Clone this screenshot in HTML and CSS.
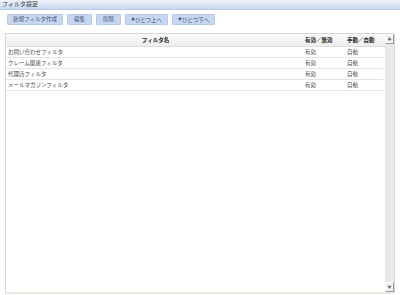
FILE: index.html
```html
<!DOCTYPE html>
<html lang="ja">
<head>
    <meta charset="UTF-8">
    <title>フィルタ設定</title>
    <link rel="stylesheet" href="styles.css">
</head>
<body>
    <div class="title-bar">フィルタ設定</div>

    <!-- ボタン -->
    <div class="toolbar">
        <button class="btn">新規フィルタ作成</button>
        <button class="btn">編集</button>
        <button class="btn">削除</button>
        <button class="btn"><span class="arrow">▲</span>ひとつ上へ</button>
        <button class="btn"><span class="arrow">▼</span>ひとつ下へ</button>
    </div>

    <!-- 一覧 -->
    <div class="list-box">
        <div class="list-main">
            <div class="row head">
                <div class="c-name">フィルタ名</div>
                <div class="c-on">有効／無効</div>
                <div class="c-auto">手動／自動</div>
            </div>
            <div class="row">
                <div class="c-name">お問い合わせフィルタ</div>
                <div class="c-on">有効</div>
                <div class="c-auto">自動</div>
            </div>
            <div class="row">
                <div class="c-name">クレーム関連フィルタ</div>
                <div class="c-on">有効</div>
                <div class="c-auto">自動</div>
            </div>
            <div class="row">
                <div class="c-name">代理店フィルタ</div>
                <div class="c-on">有効</div>
                <div class="c-auto">自動</div>
            </div>
            <div class="row">
                <div class="c-name">メールマガジンフィルタ</div>
                <div class="c-on">有効</div>
                <div class="c-auto">自動</div>
            </div>
        </div>
        <div class="scrollbar">
            <div class="sb-btn">▲</div>
            <div class="sb-track"></div>
            <div class="sb-btn">▼</div>
        </div>
    </div>
</body>
</html>
```

FILE: styles.css
```css
body {
    margin: 0;
    padding: 0;
    width: 400px;
    height: 295px;
    background-color: #fff;
    font-family: "Noto Sans CJK JP", "Liberation Sans", sans-serif;
    font-size: 5.5px;
    color: #444;
    overflow: hidden;
}

.title-bar {
    height: 9px;
    line-height: 8px;
    padding-left: 2px;
    background: linear-gradient(#eef3fa, #c9d9ef);
    border-bottom: 1px solid #b8cbe6;
    color: #333;
    font-size: 6px;
}

.toolbar {
    display: flex;
    gap: 4px;
    padding: 3px 7px 0;
    height: 16px;
}

.btn {
    height: 11px;
    min-width: 25px;
    margin-top: 1px;
    padding: 0 5px;
    border: 1px solid #b6c9e6;
    border-radius: 1px;
    background-color: #c6d7ef;
    color: #3a5582;
    font-family: inherit;
    font-size: 5.5px;
    line-height: 9px;
}

.arrow {
    font-size: 4px;
    vertical-align: 1px;
}

.list-box {
    display: flex;
    margin: 4px 5px 0;
    height: 258px;
    border: 1px solid #d6d6d6;
    border-bottom: 2px solid #e9ecdc;
}

.list-main {
    flex-grow: 1;
}

.row {
    display: flex;
    height: 10px;
    line-height: 10px;
    border-bottom: 1px solid #e4e4e4;
    margin-right: 2px;
}

.row.head {
    height: 12px;
    line-height: 12px;
    margin-right: 0;
    background: linear-gradient(#fafafa, #ededed);
    border-bottom: 1px solid #ddd;
    font-weight: bold;
    color: #222;
}

.c-name {
    flex-grow: 1;
    padding-left: 2px;
}

.head .c-name {
    text-align: center;
}

.c-on {
    width: 40px;
    padding-left: 2px;
}

.c-auto {
    width: 36px;
    padding-left: 2px;
}

.head .c-auto {
    width: 38px;
}

.scrollbar {
    width: 9px;
    display: flex;
    flex-direction: column;
    background-color: #e8e8e8;
}

.sb-btn {
    height: 8px;
    line-height: 8px;
    text-align: center;
    font-size: 4px;
    color: #666;
    background-color: #f2f2f2;
    border: 1px solid #a8a8a8;
    border-color: #fff #999 #999 #fff;
}

.sb-track {
    flex-grow: 1;
}
```
